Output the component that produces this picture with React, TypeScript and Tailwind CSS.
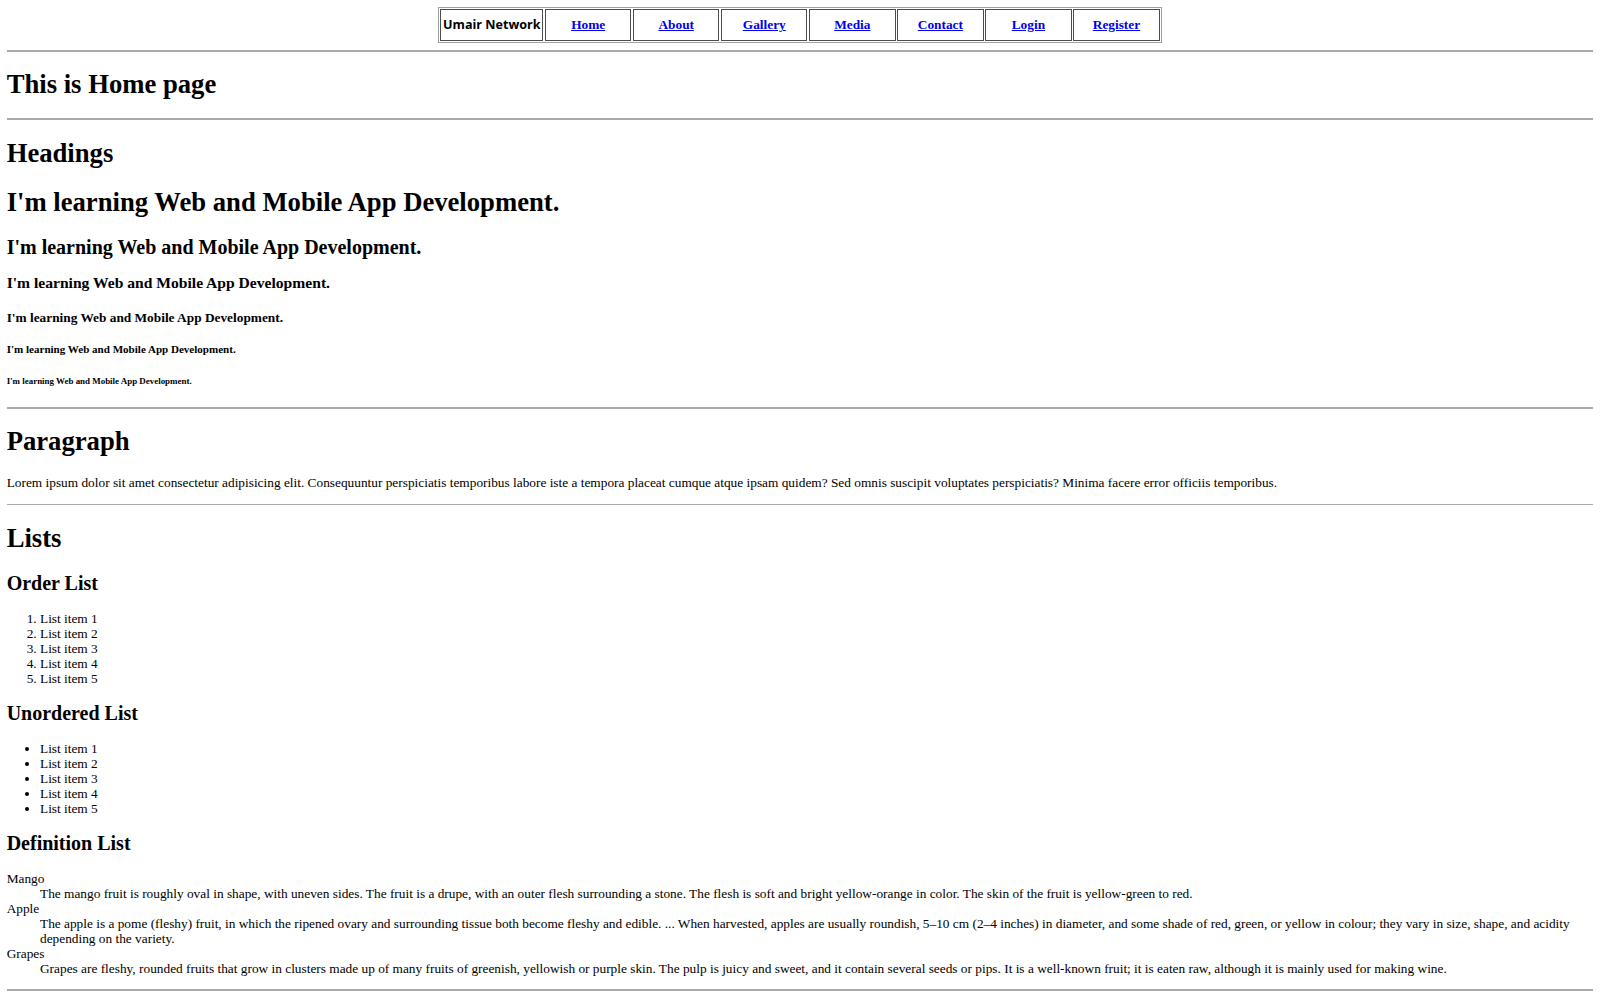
import React from 'react';

const navLinks = ['Home', 'About', 'Gallery', 'Media', 'Contact', 'Login', 'Register'];

const h1 = 'text-[26.667px] leading-[normal] font-bold my-[17.867px]';
const h2 = 'text-[20px] leading-[22px] font-bold my-[16.6px]';
const h3 = 'text-[15.6px] leading-[normal] font-bold my-[15.6px]';
const h4 = 'text-[13.333px] leading-[15px] font-bold my-[17.733px]';
const h5 = 'text-[11.067px] leading-[normal] font-bold my-[18.48px]';
const h6 = 'text-[8.933px] leading-[normal] font-bold my-[20.8px]';

const Rule: React.FC = () => <hr className="my-[6.667px] h-[1.667px] border-0 bg-[#a9a9a9]" />;

const NavBar: React.FC = () => (
  <div className="flex justify-center">
    <div className="flex h-[36.667px] gap-[1.667px] border border-[#a0a0a0] p-[1.667px]">
      <div className="flex w-[103px] items-center justify-center whitespace-nowrap border border-[#4d4d4d] font-['Open_Sans',sans-serif] text-[12.6px] font-bold">
        Umair Network
      </div>
      {navLinks.map((link) => (
        <div key={link} className="flex w-[86.4px] items-center justify-center border border-[#4d4d4d]">
          <a href="#" className="font-bold text-[#0000ee] underline">
            {link}
          </a>
        </div>
      ))}
    </div>
  </div>
);

const listItems = ['List item 1', 'List item 2', 'List item 3', 'List item 4', 'List item 5'];

const fruits = [
  {
    name: 'Mango',
    text: 'The mango fruit is roughly oval in shape, with uneven sides. The fruit is a drupe, with an outer flesh surrounding a stone. The flesh is soft and bright yellow-orange in color. The skin of the fruit is yellow-green to red.',
  },
  {
    name: 'Apple',
    text: 'The apple is a pome (fleshy) fruit, in which the ripened ovary and surrounding tissue both become fleshy and edible. ... When harvested, apples are usually roundish, 5–10 cm (2–4 inches) in diameter, and some shade of red, green, or yellow in colour; they vary in size, shape, and acidity depending on the variety.',
  },
  {
    name: 'Grapes',
    text: 'Grapes are fleshy, rounded fruits that grow in clusters made up of many fruits of greenish, yellowish or purple skin. The pulp is juicy and sweet, and it contain several seeds or pips. It is a well-known fruit; it is eaten raw, although it is mainly used for making wine.',
  },
];

const learning = "I'm learning Web and Mobile App Development.";

export default function App() {
  return (
    <div className="min-h-screen bg-white">
      <div className="m-[6.667px] font-['Liberation_Serif',serif] text-[13.333px] leading-[15px] text-black">
        <NavBar />
        <Rule />
        <h1 className={h1}>This is Home page</h1>
        <Rule />

        <section>
          <h1 className={h1}>Headings</h1>
          <h1 className={h1}>{learning}</h1>
          <h2 className={h2}>{learning}</h2>
          <h3 className={h3}>{learning}</h3>
          <h4 className={h4}>{learning}</h4>
          <h5 className={h5}>{learning}</h5>
          <h6 className={h6}>{learning}</h6>
        </section>
        <Rule />

        <section>
          <h1 className={h1}>Paragraph</h1>
          <p className="my-[13.333px]">
            Lorem ipsum dolor sit amet consectetur adipisicing elit. Consequuntur perspiciatis temporibus labore iste a
            tempora placeat cumque atque ipsam quidem? Sed omnis suscipit voluptates perspiciatis? Minima facere error
            officiis temporibus.
          </p>
        </section>
        <Rule />

        <section>
          <h1 className={h1}>Lists</h1>
          <h2 className={h2}>Order List</h2>
          <ol className="my-[13.333px] list-outside list-decimal pl-[33.333px]">
            {listItems.map((item) => (
              <li key={item}>{item}</li>
            ))}
          </ol>
          <h2 className={h2}>Unordered List</h2>
          <ul className="my-[13.333px] list-outside list-disc pl-[33.333px]">
            {listItems.map((item) => (
              <li key={item}>{item}</li>
            ))}
          </ul>
          <h2 className={h2}>Definition List</h2>
          <dl className="my-[13.333px]">
            {fruits.map((fruit) => (
              <React.Fragment key={fruit.name}>
                <dt>{fruit.name}</dt>
                <dd className="ml-[33.333px]">{fruit.text}</dd>
              </React.Fragment>
            ))}
          </dl>
        </section>
        <Rule />
      </div>
    </div>
  );
}
